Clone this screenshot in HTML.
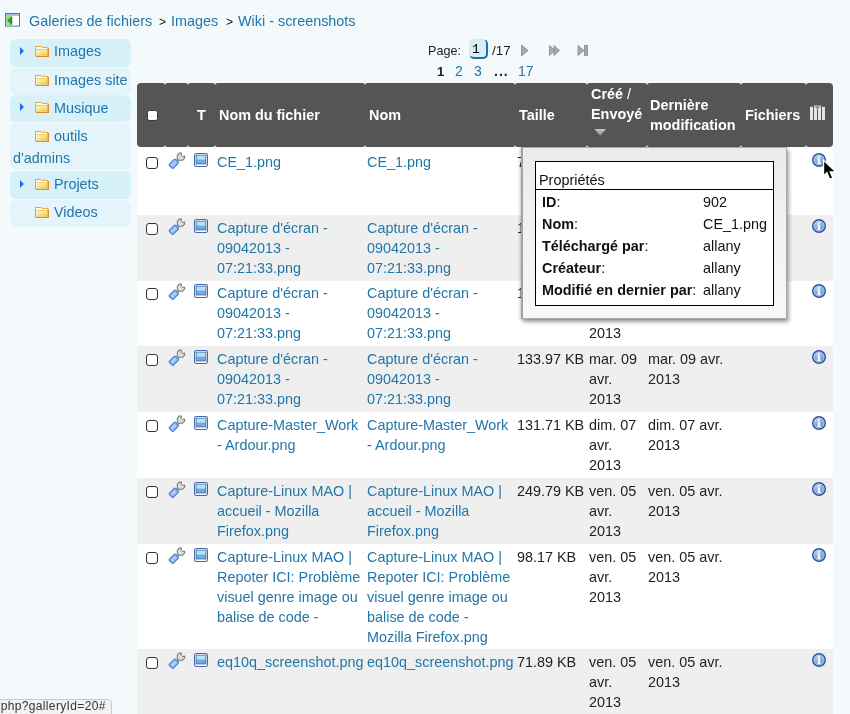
<!DOCTYPE html>
<html><head><meta charset="utf-8">
<style>
*{box-sizing:border-box}
html,body{margin:0;padding:0}
body{width:850px;height:714px;overflow:hidden;background:#f4f9fb;font-family:"Liberation Sans",sans-serif;font-size:14.4px;color:#222;position:relative}
a{color:#2277aa;text-decoration:none}
.abs{position:absolute;white-space:nowrap}
.crumb{top:11px;line-height:20px}
.side{position:absolute;left:10px;width:121px;border-radius:6px}
.side.d{background:#d7f1f9}
.side.l{background:#e3f5fa}
.tri{position:absolute;left:10px;top:9px;width:0;height:0;border-left:4.8px solid #1a6ff0;border-top:4px solid transparent;border-bottom:4px solid transparent}
.fold{position:absolute;left:25px;width:14px;height:11px}
.side .txt{position:absolute;left:44px;top:3px;line-height:22px;white-space:nowrap}
table.g{position:absolute;left:137px;top:83px;border-collapse:separate;border-spacing:0;table-layout:fixed;width:696px}
table.g th{background:#555;color:#fff;font-weight:bold;height:64px;border-radius:2.5px;text-align:left;padding:0 0 0 4px;line-height:20px;vertical-align:middle;}
table.g td{vertical-align:top;padding:3px 2px 0 2px;line-height:20px}
tr.o td{background:#fff}
tbody tr:first-child td{border-top:1px solid #f4f9fb}
tbody tr:first-child td > *{position:relative;top:1px}
tbody tr:nth-child(3) td > *{position:relative;top:-1px}
tr.e td{background:#efefef}
.cb{display:inline-block;width:12px;height:12px;border:1.6px solid #333;border-radius:3px;background:#fff}
.ic{display:block;overflow:visible}
table.g td:nth-child(1){padding:8px 0 0 9px}
table.g td:nth-child(2){padding:4px 0 0 3px}
table.g td:nth-child(3){padding:4px 0 0 6px}
table.g td:nth-child(10){padding:4px 0 0 6px}
table.g td:nth-child(8){padding-left:1px}
table.g th:first-child{border-radius:4px 2.5px 2.5px 4px}
table.g th:last-child{border-radius:2.5px 4px 4px 2.5px}
table.g th:nth-child(8){padding-left:3px}
table.g td .cb{display:block}
</style></head>
<body><div id="wrap" style="position:absolute;left:0;top:0;width:850px;height:714px;will-change:transform">
<svg width="0" height="0" style="position:absolute">
<defs>
<linearGradient id="gim" x1="0" y1="0" x2="0" y2="1"><stop offset="0" stop-color="#b8e6fc"/><stop offset="0.45" stop-color="#9cd2f4"/><stop offset="0.55" stop-color="#6fa9e2"/><stop offset="1" stop-color="#5d9ad8"/></linearGradient>
<radialGradient id="ginf" cx="0.4" cy="0.3" r="0.7"><stop offset="0" stop-color="#b0cbec"/><stop offset="1" stop-color="#6a93cc"/></radialGradient>
<symbol id="wr" viewBox="0 0 17 17" overflow="visible">
 <path d="M8.6 8.4 L10.6 6.4" stroke="#808080" stroke-width="2.8" fill="none"/>
 <path d="M8.6 8.4 L10.6 6.4" stroke="#d0d0d0" stroke-width="1.2" fill="none"/>
 <path d="M9.3 2.1 L11.2 0.1 H13.3 V2.6 L13.1 3.6 L14.4 3.4 L16.6 3.1 V5.2 L14.4 7.3 H10.6 L9.3 5.9 Z" fill="#dcdcdc" stroke="#7a7a7a" stroke-width="1.05" stroke-linejoin="round"/>
 <circle cx="13.2" cy="3.5" r="0.75" fill="#fff"/>
 <rect x="-4.3" y="-2.8" width="8.6" height="5.6" rx="0.9" transform="translate(5.8,10.8) rotate(-45)" fill="#92b5ee" stroke="#4a7dd8" stroke-width="1.1"/>
 <rect x="-3" y="-1.3" width="6" height="2.6" rx="1" transform="translate(5.8,10.8) rotate(-45)" fill="#b2cbf3"/>
</symbol>
<symbol id="im" viewBox="0 0 14 14">
 <rect x="0.55" y="0.55" width="12.9" height="12.9" rx="1.6" fill="#fff" stroke="#4468b4" stroke-width="1.1"/>
 <rect x="2.1" y="2.1" width="9.8" height="4.6" fill="#b2e3fa"/>
 <rect x="2.1" y="6.5" width="9.8" height="4.5" fill="#72abe3"/>
 <rect x="2.1" y="2.1" width="9.8" height="8.9" fill="none" stroke="#2f5c84" stroke-width="0.7"/>
</symbol>
<symbol id="inf" viewBox="0 0 14 14">
 <circle cx="7" cy="7" r="6.3" fill="url(#ginf)" stroke="#2b53a6" stroke-width="1.4"/>
 <circle cx="7" cy="7" r="5" fill="none" stroke="#c6d8f0" stroke-width="0.6"/>
 <rect x="6.1" y="3" width="1.8" height="1.6" fill="#fff"/>
 <path d="M5.6 5.6 H7.9 V9.8 H8.6 V10.9 H5.4 V9.8 H6.1 V6.6 H5.6 Z" fill="#fff"/>
</symbol>
<symbol id="fd" viewBox="0 0 14 11">
 <linearGradient id="gfd" x1="0" y1="0" x2="1" y2="1"><stop offset="0" stop-color="#fff6d0"/><stop offset="1" stop-color="#efc93a"/></linearGradient>
 <path d="M0.5 0.5 H6.3 L7.1 1.4 H12.8 V10 H0.5 Z" fill="#fffbe6" stroke="#e2aa3c" stroke-width="1"/>
 <rect x="1.4" y="4.2" width="10.6" height="5.2" fill="url(#gfd)"/>
 <path d="M1.4 3.6 H12" stroke="#e9c25a" stroke-width="0.9"/>
 <path d="M1 10.5 H13.4 V2" stroke="#e08c26" stroke-width="1.1" fill="none"/>
</symbol>
</defs></svg>
<!-- breadcrumb -->
<svg class="abs" style="left:5px;top:13px" width="15" height="14" viewBox="0 0 15 14">
 <defs><linearGradient id="ggr" x1="0" y1="0" x2="1" y2="0"><stop offset="0" stop-color="#a6e09a"/><stop offset="0.7" stop-color="#8fd07e"/><stop offset="1" stop-color="#f4fbf2"/></linearGradient></defs>
 <rect x="0.5" y="0.5" width="14" height="12.6" fill="#fff" stroke="#5772b4"/>
 <rect x="1" y="1" width="13" height="1.8" fill="#9cb9ea"/>
 <rect x="1" y="3" width="7.5" height="9.6" fill="url(#ggr)"/>
 <path d="M2 7.6 L5.6 4.6 V10.6 Z" fill="#2f9a2f"/>
 <rect x="5.6" y="4" width="1.3" height="7.4" fill="#247a24"/>
</svg>
<a class="abs crumb" style="left:29px">Galeries de fichiers</a>
<span class="abs crumb" style="left:159px;top:12px;font-size:12px;color:#111">&gt;</span>
<a class="abs crumb" style="left:171px">Images</a>
<span class="abs crumb" style="left:226px;top:12px;font-size:12px;color:#111">&gt;</span>
<a class="abs crumb" style="left:238px">Wiki - screenshots</a>

<!-- sidebar -->
<div class="side d" style="top:39px;height:28px"><div class="tri" style="top:8px"></div><svg class="fold" style="top:7px" width="14" height="11"><use href="#fd"/></svg><a class="txt" style="top:1px">Images</a></div>
<div class="side l" style="top:68px;height:27px"><svg class="fold" style="top:7px" width="14" height="11"><use href="#fd"/></svg><a class="txt" style="top:1px">Images site</a></div>
<div class="side d" style="top:95px;height:27px"><div class="tri" style="top:8px"></div><svg class="fold" style="top:7px" width="14" height="11"><use href="#fd"/></svg><a class="txt" style="top:2px">Musique</a></div>
<div class="side l" style="top:123px;height:47px"><svg class="fold" style="top:8px" width="14" height="11"><use href="#fd"/></svg><a class="txt" style="left:44px;top:2px">outils</a><a class="txt" style="left:3px;top:24px">d'admins</a></div>
<div class="side d" style="top:171px;height:28px"><div class="tri" style="top:9px"></div><svg class="fold" style="top:8px" width="14" height="11"><use href="#fd"/></svg><a class="txt" style="top:2px">Projets</a></div>
<div class="side l" style="top:200px;height:27px"><svg class="fold" style="top:7px" width="14" height="11"><use href="#fd"/></svg><a class="txt" style="top:1px">Videos</a></div>

<!-- pagination -->
<span class="abs" style="left:428px;top:43px;font-size:12.6px;line-height:16px">Page:</span>
<div class="abs" style="left:469px;top:39px;width:19px;height:20px;border-radius:5px;background:#d6f0f8;border:1px solid #d0ecf6;border-right:2px solid #1f6ea6;border-bottom:2.5px solid #1f6ea6;font-family:'Liberation Mono',monospace;font-size:13px;line-height:16px;padding-left:2px;padding-top:2px;color:#000">1</div>
<span class="abs" style="left:492px;top:43px;font-size:13.4px;line-height:16px">/17</span>
<svg class="abs" style="left:520px;top:44px" width="70" height="13" viewBox="0 0 70 13">
 <path d="M1.5 1 L8 6.5 L1.5 12 Z" fill="#aaa" stroke="#888" stroke-width="0.8"/>
 <path d="M29.5 1.5 L35 6.5 L29.5 11.5 Z" fill="#aaa" stroke="#888" stroke-width="0.8"/>
 <path d="M34 1.5 L39.5 6.5 L34 11.5 Z" fill="#aaa" stroke="#888" stroke-width="0.8"/>
 <path d="M58 1.5 L64 6.5 L58 11.5 Z" fill="#aaa" stroke="#888" stroke-width="0.8"/>
 <rect x="64.5" y="1.5" width="3" height="10" fill="#aaa" stroke="#888" stroke-width="0.8"/>
</svg>
<span class="abs" style="left:437px;top:64px;font-size:13px;line-height:16px;font-weight:bold">1</span>
<a class="abs" style="left:455px;top:63px;font-size:14px;line-height:16px">2</a>
<a class="abs" style="left:474px;top:63px;font-size:14px;line-height:16px">3</a>
<span class="abs" style="left:494px;top:63px;font-size:14px;line-height:16px;font-weight:bold;letter-spacing:1px">...</span>
<a class="abs" style="left:518px;top:63px;font-size:14px;line-height:16px">17</a>

<!-- table -->
<table class="g">
<colgroup><col style="width:28px"><col style="width:23px"><col style="width:27px"><col style="width:150px"><col style="width:150px"><col style="width:72px"><col style="width:60px"><col style="width:94px"><col style="width:65px"><col style="width:27px"></colgroup>
<thead><tr>
<th style="padding-left:10px"><span class="cb" style="border:1px solid #3a3a3a;width:11px;height:11px;margin-top:6px;border-radius:2.5px"></span></th>
<th></th>
<th style="padding-left:9px">T</th>
<th>Nom du fichier</th>
<th>Nom</th>
<th>Taille</th>
<th style="vertical-align:top;padding-top:1px">Créé <span style="font-weight:normal">/</span><br>Envoyé</th>
<th>Dernière modification</th>
<th>Fichiers</th>
<th></th>
</tr></thead>
<tbody>
<tr class="o" style="height:68px"><td><span class="cb"></span></td><td><svg class="ic" width="17" height="17"><use href="#wr"/></svg></td><td><svg class="ic" width="14" height="14"><use href="#im"/></svg></td><td><a>CE_1.png</a></td><td><a>CE_1.png</a></td><td><span>78.65 KB</span></td><td><span>mar. 09 avr. 2013</span></td><td><span>mar. 09 avr. 2013</span></td><td></td><td><svg class="ic" width="14" height="14"><use href="#inf"/></svg></td></tr>
<tr class="e" style="height:66px"><td><span class="cb"></span></td><td><svg class="ic" width="17" height="17"><use href="#wr"/></svg></td><td><svg class="ic" width="14" height="14"><use href="#im"/></svg></td><td><a>Capture d'écran - 09042013 - 07:21:33.png</a></td><td><a>Capture d'écran - 09042013 - 07:21:33.png</a></td><td><span>137.08 KB</span></td><td><span>mar. 09 avr. 2013</span></td><td><span>mar. 09 avr. 2013</span></td><td></td><td><svg class="ic" width="14" height="14"><use href="#inf"/></svg></td></tr>
<tr class="o" style="height:65px"><td><span class="cb"></span></td><td><svg class="ic" width="17" height="17"><use href="#wr"/></svg></td><td><svg class="ic" width="14" height="14"><use href="#im"/></svg></td><td><a>Capture d'écran - 09042013 - 07:21:33.png</a></td><td><a>Capture d'écran - 09042013 - 07:21:33.png</a></td><td><span>136.45 KB</span></td><td><span>mar. 09 avr. 2013</span></td><td><span>mar. 09 avr. 2013</span></td><td></td><td><svg class="ic" width="14" height="14"><use href="#inf"/></svg></td></tr>
<tr class="e" style="height:66px"><td><span class="cb"></span></td><td><svg class="ic" width="17" height="17"><use href="#wr"/></svg></td><td><svg class="ic" width="14" height="14"><use href="#im"/></svg></td><td><a>Capture d'écran - 09042013 - 07:21:33.png</a></td><td><a>Capture d'écran - 09042013 - 07:21:33.png</a></td><td><span>133.97 KB</span></td><td><span>mar. 09 avr. 2013</span></td><td><span>mar. 09 avr. 2013</span></td><td></td><td><svg class="ic" width="14" height="14"><use href="#inf"/></svg></td></tr>
<tr class="o" style="height:66px"><td><span class="cb"></span></td><td><svg class="ic" width="17" height="17"><use href="#wr"/></svg></td><td><svg class="ic" width="14" height="14"><use href="#im"/></svg></td><td><a>Capture-Master_Work - Ardour.png</a></td><td><a>Capture-Master_Work - Ardour.png</a></td><td><span>131.71 KB</span></td><td><span>dim. 07 avr. 2013</span></td><td><span>dim. 07 avr. 2013</span></td><td></td><td><svg class="ic" width="14" height="14"><use href="#inf"/></svg></td></tr>
<tr class="e" style="height:66px"><td><span class="cb"></span></td><td><svg class="ic" width="17" height="17"><use href="#wr"/></svg></td><td><svg class="ic" width="14" height="14"><use href="#im"/></svg></td><td><a>Capture-Linux MAO | accueil - Mozilla Firefox.png</a></td><td><a>Capture-Linux MAO | accueil - Mozilla Firefox.png</a></td><td><span>249.79 KB</span></td><td><span>ven. 05 avr. 2013</span></td><td><span>ven. 05 avr. 2013</span></td><td></td><td><svg class="ic" width="14" height="14"><use href="#inf"/></svg></td></tr>
<tr class="o" style="height:105px"><td><span class="cb"></span></td><td><svg class="ic" width="17" height="17"><use href="#wr"/></svg></td><td><svg class="ic" width="14" height="14"><use href="#im"/></svg></td><td><a>Capture-Linux MAO | Repoter ICI: Problème visuel genre image ou balise de code -</a></td><td><a>Capture-Linux MAO | Repoter ICI: Problème visuel genre image ou balise de code - Mozilla Firefox.png</a></td><td><span>98.17 KB</span></td><td><span>ven. 05 avr. 2013</span></td><td><span>ven. 05 avr. 2013</span></td><td></td><td><svg class="ic" width="14" height="14"><use href="#inf"/></svg></td></tr>
<tr class="e" style="height:70px"><td><span class="cb"></span></td><td><svg class="ic" width="17" height="17"><use href="#wr"/></svg></td><td><svg class="ic" width="14" height="14"><use href="#im"/></svg></td><td><a>eq10q_screenshot.png</a></td><td><a>eq10q_screenshot.png</a></td><td><span>71.89 KB</span></td><td><span>ven. 05 avr. 2013</span></td><td><span>ven. 05 avr. 2013</span></td><td></td><td><svg class="ic" width="14" height="14"><use href="#inf"/></svg></td></tr>

</tbody>
</table>

<!-- header icons -->
<svg class="abs" style="left:594px;top:128px" width="13" height="9" viewBox="0 0 13 9"><defs><linearGradient id="gsa" x1="0" y1="0" x2="0" y2="1"><stop offset="0" stop-color="#c8c8c8"/><stop offset="1" stop-color="#8a8a8a"/></linearGradient></defs><path d="M0.5 1 H12 L6.2 7.8 Z" fill="url(#gsa)"/></svg>
<svg class="abs" style="left:809px;top:104px" width="17" height="17" viewBox="0 0 17 17">
 <rect x="1" y="2.8" width="3" height="13.2" fill="#e4e4e4"/>
 <rect x="5" y="1" width="3" height="15" fill="#e4e4e4"/>
 <rect x="9" y="1" width="3" height="15" fill="#e4e4e4"/>
 <rect x="13" y="2.8" width="3" height="13.2" fill="#e4e4e4"/>
 <path d="M4.5 1 H12.5 L8.5 6 Z" fill="#9a9a9a"/>
</svg>

<!-- popup -->
<div class="abs" style="left:521px;top:147px;width:266px;height:172px;background:linear-gradient(#ebebeb,#f8f8f8);border:1px solid #a9a9a9;border-left:2px solid #a2a2a2;box-shadow:-1px 1px 3px rgba(0,0,0,0.18),2px 3px 4px rgba(0,0,0,0.35)">
 <div style="position:absolute;left:12px;top:13px;width:239px;height:145px;background:#fff;border:1.5px solid #000">
  <div style="position:absolute;left:3px;top:8px;line-height:20px;font-size:14.4px;color:#111">Propriétés</div>
  <div style="position:absolute;left:0;right:0;top:27px;border-top:1.5px solid #000"></div>
  <div style="position:absolute;left:6px;top:29px;line-height:22px;font-size:14.4px;color:#111">
   <b>ID</b>:<br><b>Nom</b>:<br><b>Téléchargé par</b>:<br><b>Créateur</b>:<br><b>Modifié en dernier par</b>:
  </div>
  <div style="position:absolute;left:167px;top:29px;line-height:22px;font-size:14.4px;color:#111">902<br>CE_1.png<br>allany<br>allany<br>allany</div>
 </div>
</div>

<!-- cursor -->
<svg class="abs" style="left:821px;top:158px" width="17" height="24" viewBox="0 0 17 24">
 <path d="M2.6 2.3 V17.6 L5.9 14.6 L8.7 21.2 L11.8 19.9 L9.1 13.9 H14.8 Z" fill="#000" stroke="#fff" stroke-width="1.2" stroke-linejoin="miter"/>
</svg>

<!-- status bar -->
<div class="abs" style="left:-4px;top:699px;width:116px;height:20px;background:#f2f2f2;border:1px solid #c9c9c9;border-top-right-radius:4px;font-size:12px;line-height:12px;letter-spacing:0.35px;color:#333;overflow:hidden"><span style="position:relative;left:0px">.php?galleryId=20#</span></div>
</div></body></html>
